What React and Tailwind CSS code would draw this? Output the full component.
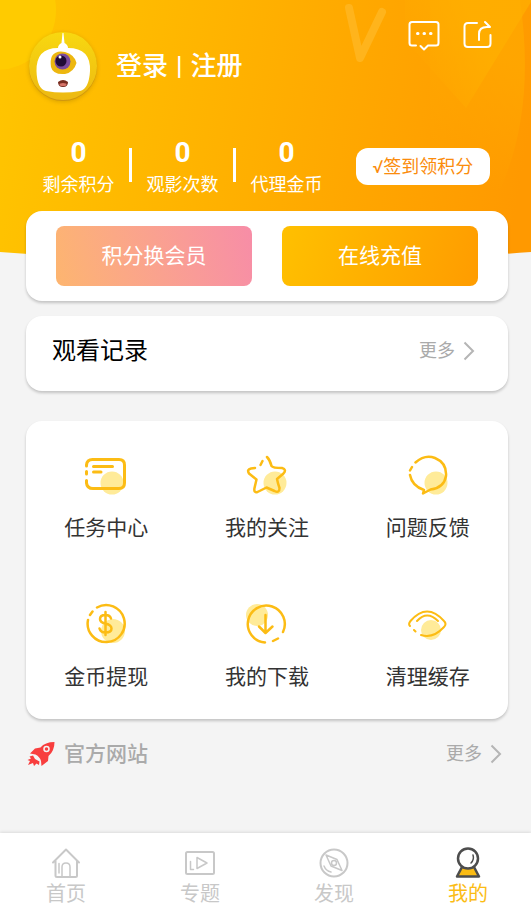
import { useState } from "react";

const stats = [
  { label: "剩余积分", value: 0 },
  { label: "观影次数", value: 0 },
  { label: "代理金币", value: 0 },
];

function HeaderBackground() {
  return (
    <svg
      className="absolute inset-x-0 top-0 h-[262px] w-full"
      viewBox="0 0 531 262"
      preserveAspectRatio="none"
      aria-hidden="true"
    >
      <defs>
        <linearGradient id="sky" gradientUnits="userSpaceOnUse" x1="0" y1="100" x2="520" y2="190">
          <stop offset="0" stopColor="#ffc400" />
          <stop offset="1" stopColor="#ff9900" />
        </linearGradient>
        <linearGradient id="ray" gradientUnits="userSpaceOnUse" x1="415" y1="70" x2="480" y2="40">
          <stop offset="0" stopColor="#ffb000" stopOpacity="0" />
          <stop offset="1" stopColor="#ffb000" stopOpacity="0.7" />
        </linearGradient>
        <linearGradient id="disc" gradientUnits="userSpaceOnUse" x1="460" y1="170" x2="525" y2="70">
          <stop offset="0" stopColor="#ffa800" stopOpacity="0" />
          <stop offset="1" stopColor="#ffa800" stopOpacity="0.8" />
        </linearGradient>
        <clipPath id="wave">
          <path d="M0 0H531V252Q265 272 0 252Z" />
        </clipPath>
      </defs>
      <g clipPath="url(#wave)">
        <rect width="531" height="262" fill="url(#sky)" />
        <circle cx="-4" cy="10" r="60" fill="#ffcb00" />
        <path d="M520 0Q536 110 500 190Q440 200 430 130L430 0Z" fill="url(#disc)" />
        <path d="M405 0H531V2L466 108L405 40Z" fill="url(#ray)" />
        <path
          d="M349 8L360 58L382 12"
          fill="none"
          stroke="#ffb41c"
          strokeWidth="8"
          strokeLinecap="round"
          strokeLinejoin="round"
        />
      </g>
    </svg>
  );
}

function Avatar() {
  return (
    <svg className="h-[70px] w-[70px] shrink-0 drop-shadow-sm" viewBox="0 0 70 70" aria-hidden="true">
      <defs>
        <linearGradient id="face" x1="0" y1="0" x2="0" y2="1">
          <stop offset="0" stopColor="#f8d810" />
          <stop offset="1" stopColor="#edb912" />
        </linearGradient>
      </defs>
      <circle cx="35" cy="36" r="34" fill="#d0960f" />
      <circle cx="35" cy="35" r="34" fill="url(#face)" />
      <path d="M34.500 2H35.500L36.500 12Q40 14 40 17Q63 17 62 40Q61 58 52 60Q35 63 18 60Q9 58 8.500 40Q8 17 30 17Q30 14 33.500 12Z" fill="#fff" />
      <path d="M24 25Q28 19 37 21Q47 24 48.500 32Q46 41 37 43Q25 44 23 36Q22 29 24 25Z" fill="#edb70f" />
      <circle cx="34.500" cy="30.500" r="8" fill="#7b4a9c" />
      <circle cx="33" cy="30" r="5.500" fill="#210b36" />
      <circle cx="32" cy="26" r="1.500" fill="#fff" />
      <path d="M30 51Q35 47 40 51Q40 56 35 56Q30 56 30 51Z" fill="#772d20" />
      <ellipse cx="35" cy="53.500" rx="3.500" ry="1.500" fill="#d7756a" />
    </svg>
  );
}

function MessageIcon() {
  return (
    <svg width="32" height="32" viewBox="0 0 32 32" fill="none" stroke="#fff" strokeWidth="2" strokeLinecap="round" strokeLinejoin="round">
      <path d="M8 25.500H4Q1.500 25.500 1.500 23V4.500Q1.500 2 4 2H28Q30.500 2 30.500 4.500V23Q30.500 25.500 28 25.500H20L16 29.500L12.500 26" />
      <path d="M9.500 13.500H10M16 13.500H16.500M22.500 13.500H23" strokeWidth="3" />
    </svg>
  );
}

function ShareIcon() {
  return (
    <svg width="32" height="32" viewBox="0 0 32 32" fill="none" stroke="#fff" strokeWidth="2" strokeLinecap="round" strokeLinejoin="round">
      <path d="M15 3H6Q2.500 3 2.500 6.500V23.500Q2.500 27 6 27H25Q28.500 27 28.500 23.500V15" />
      <path d="M17 20V14Q17 7 25 7H28L23 2" />
    </svg>
  );
}

function TaskIcon() {
  return (
    <>
      <circle cx="27" cy="29" r="11.500" fill="#ffeb99" stroke="none" />
      <path d="M1.500 12V11Q2 5.500 7.500 5.500H34Q39.500 5.500 39.500 11V29Q39.500 34.500 34 34.500H8Q2 34.500 1.500 29V26.500M1.500 17.500V20" strokeWidth="3" />
      <path d="M8.500 12.500H27.500M8.500 18H16" strokeWidth="3" />
    </>
  );
}

function StarIcon() {
  return (
    <>
      <circle cx="29" cy="29" r="11.500" fill="#ffeb99" stroke="none" />
      <path d="M21 3Q24 6 25.500 12Q27 14 36 14Q41 15.500 37.500 19.500L31 25Q32 30 33.500 34Q33.500 39.500 28.500 37L20.500 33.500L11.500 38Q7.500 39 8.500 34L10.500 25.500L3 19.500Q0.500 15.500 5 14.500L9 14M14.500 11L16.500 7" />
    </>
  );
}

function FeedbackIcon() {
  return (
    <>
      <circle cx="29" cy="29" r="11.500" fill="#ffeb99" stroke="none" />
      <path d="M8.500 8.500Q18 0 28 4Q40 9 39 22Q37 34 23.500 35.500L16 39.500L17 36Q5 32 3 21M3 16.500L5 13" />
    </>
  );
}

function CoinIcon() {
  return (
    <>
      <circle cx="28" cy="28" r="12" fill="#ffeb99" stroke="none" />
      <path d="M12 4.500A18.500 18.500 0 1 1 3 17M5 12L7.500 8.500" />
      <path d="M26 15.500Q25 12 20.500 12Q15 12 15 16Q15 19.500 20.500 20.500Q26.500 22 26.500 25.500Q26.500 29.500 20.500 29.500Q15.500 29.500 14.500 25.500M20.500 9V32" />
    </>
  );
}

function DownloadIcon() {
  return (
    <>
      <circle cx="11" cy="12" r="11" fill="#ffeb99" stroke="none" />
      <path d="M19 39.500A18.500 18.500 0 1 1 37 29M27 38L32 35.500" />
      <path d="M19.500 12V29M13 23.500L19.500 30L26.500 23.500" />
    </>
  );
}

function EyeIcon() {
  return (
    <>
      <circle cx="24" cy="27" r="10" fill="#ffeb99" stroke="none" />
      <path d="M3 23Q1 21 3.500 18Q20 -1 37 18Q40 21 37 24Q26 36 14 32M7 27L8.500 28.500" strokeWidth="2" />
      <path d="M10 18Q20 7 31 18" strokeWidth="2" />
    </>
  );
}

const services = [
  { label: "任务中心", icon: TaskIcon },
  { label: "我的关注", icon: StarIcon },
  { label: "问题反馈", icon: FeedbackIcon },
  { label: "金币提现", icon: CoinIcon },
  { label: "我的下载", icon: DownloadIcon },
  { label: "清理缓存", icon: EyeIcon },
];

function RocketIcon() {
  return (
    <svg width="28" height="26" viewBox="0 0 28 26" aria-hidden="true">
      <path fill="#f83e3e" d="M27.500 1Q27.500 10 21.500 15L21 20L14.500 25L14 20Q13 16 8.500 13.500L3 12.500L8 7.500L13.500 6.500Q18 1 27.500 1Z" />
      <path fill="#f83e3e" d="M6 14.500L8 18L12.500 20.500L12 24L9.500 22.500L7 25L6 22L1 24L3 20L0.500 19L4 17.500L2.500 15.500Z" />
      <circle cx="19.500" cy="8" r="2.500" fill="#f83e3e" stroke="#f3f3f3" strokeWidth="1.500" />
    </svg>
  );
}

function HomeIcon() {
  return (
    <>
      <path d="M2 15.500L15 2.500L28 15.500M4.500 14V28.500Q4.500 30 6 30H24.500Q26 30 26 28.500V14" />
      <path d="M11 30V20Q11 16 15 16Q19 16 19 20V30M8 16.500V26" strokeWidth="1.500" />
    </>
  );
}

function TopicIcon() {
  return (
    <>
      <rect x="1" y="5" width="28" height="22" rx="1.500" />
      <path d="M12 10.500V21.500L22 16ZM5.500 14.500V22.500H8.500" strokeWidth="1.500" />
    </>
  );
}

function DiscoverIcon() {
  return (
    <>
      <circle cx="15" cy="16" r="13.500" />
      <path d="M7 8L18 12.500L23 23.500L12 19ZM5 19Q7 24 12 25" strokeWidth="1.500" />
      <circle cx="15" cy="16" r="2.500" strokeWidth="1.500" />
    </>
  );
}

function MineIcon() {
  return (
    <>
      <path d="M9 20H21L26 29.500H4Z" fill="#fbbc14" stroke="#4d4d4d" strokeWidth="2.500" />
      <circle cx="15" cy="11.500" r="10" fill="#fff" stroke="#4d4d4d" strokeWidth="2.500" />
      <path d="M20 8Q21.500 12.500 18 16" stroke="#4d4d4d" strokeWidth="1.500" />
    </>
  );
}

const tabs = [
  { id: "home", label: "首页", icon: HomeIcon },
  { id: "topic", label: "专题", icon: TopicIcon },
  { id: "discover", label: "发现", icon: DiscoverIcon },
  { id: "mine", label: "我的", icon: MineIcon },
];

function MoreLink() {
  return (
    <a href="#more" className="flex items-center gap-2 text-[18px] leading-6 text-[#aaaaaa]">
      更多
      <svg width="12" height="20" viewBox="0 0 12 20" fill="none" stroke="#b5b5b5" strokeWidth="2" aria-hidden="true">
        <path d="M1.500 1.500L10 10L1.500 18.500" />
      </svg>
    </a>
  );
}

export default function App() {
  const [activeTab, setActiveTab] = useState("mine");

  return (
    <div className="relative flex min-h-screen flex-col bg-[#f4f4f4] font-[Roboto,'Noto_Sans_CJK_SC',sans-serif]">
      <HeaderBackground />
      <main className="relative pr-[23px] pl-[26px]">
        <header className="text-white">
          <div className="flex items-start justify-between pt-5 pr-[14px] pl-[2px]">
            <div className="flex items-center gap-[18px] pt-[11px]">
              <Avatar />
              <h1 className="flex gap-2 text-[26px] leading-9 font-medium">
                <a href="#login">登录</a>
                <span>|</span>
                <a href="#register">注册</a>
              </h1>
            </div>
            <div className="flex gap-[22px]">
              <button type="button" aria-label="消息">
                <MessageIcon />
              </button>
              <button type="button" aria-label="分享">
                <ShareIcon />
              </button>
            </div>
          </div>

          <div className="mt-9 flex items-start justify-between pr-[18px] pl-[2px]">
            <dl className="flex items-start">
              {stats.map((item, i) => (
                <div key={item.label} className="flex items-start">
                  {i > 0 && <span className="mt-[11px] h-[34px] w-[3px] bg-white" />}
                  <div className="flex w-[101px] flex-col-reverse items-center">
                    <dt className="text-[18px] leading-8">{item.label}</dt>
                    <dd className="text-[28px] leading-8 font-bold">{item.value}</dd>
                  </div>
                </div>
              ))}
            </dl>
            <button
              type="button"
              className="mt-[11px] h-[37px] w-[134px] rounded-xl bg-white text-[18px] leading-6 text-[#fb8c0c]"
            >
              √签到领积分
            </button>
          </div>
        </header>

        <section className="mt-[10px] flex gap-[30px] rounded-2xl bg-white px-[30px] py-[15px] shadow-[0_2px_3px_rgba(0,0,0,0.2)]">
          <button
            type="button"
            className="h-[60px] flex-1 rounded-lg bg-linear-75 from-[#fdb56f] to-[#f78da7] text-[21px] leading-8 text-white"
          >
            积分换会员
          </button>
          <button
            type="button"
            className="h-[60px] flex-1 rounded-lg bg-linear-105 from-[#ffc000] to-[#ff9c00] text-[21px] leading-8 text-white"
          >
            在线充值
          </button>
        </section>

        <section className="mt-[15px] flex h-[75px] items-center justify-between rounded-2xl bg-white pr-[33px] pb-[6px] pl-[26px] shadow-[0_2px_3px_rgba(0,0,0,0.2)]">
          <h2 className="text-[24px] leading-8 text-black">观看记录</h2>
          <MoreLink />
        </section>

        <section className="mt-[30px] grid grid-cols-3 rounded-2xl bg-white shadow-[0_2px_3px_rgba(0,0,0,0.2)]">
          {services.map(({ label, icon: Icon }) => (
            <a
              key={label}
              href="#service"
              className="flex h-[149px] flex-col items-center gap-4 pt-[33px] text-[21px] leading-8 text-[#333333]"
            >
              <svg
                width="42"
                height="42"
                viewBox="0 0 42 42"
                fill="none"
                stroke="#fcbc14"
                strokeWidth="2.500"
                strokeLinecap="round"
                strokeLinejoin="round"
                aria-hidden="true"
              >
                <Icon />
              </svg>
              {label}
            </a>
          ))}
        </section>

        <section className="mt-[19px] mb-5 flex items-center justify-between pr-[6px] pl-px">
          <h2 className="flex items-center gap-[9px] text-[21px] leading-8 font-medium text-[#aaaaaa]">
            <RocketIcon />
            官方网站
          </h2>
          <MoreLink />
        </section>
      </main>

      <nav className="sticky bottom-0 mt-auto flex justify-between bg-white pt-[14px] pr-[43px] pb-[5px] pl-[46px] shadow-[0_-1px_3px_rgba(0,0,0,0.1)]">
        {tabs.map(({ id, label, icon: Icon }) => (
          <a
            key={id}
            href={`#${id}`}
            onClick={() => setActiveTab(id)}
            aria-current={activeTab === id ? "page" : undefined}
            className={`flex flex-col items-center text-[20px] leading-[30px] ${
              activeTab === id ? "text-[#fbbc14]" : "text-[#c8c8c8]"
            }`}
          >
            <svg
              width="30"
              height="32"
              viewBox="0 0 30 32"
              fill="none"
              stroke="#c8c8c8"
              strokeWidth="2"
              strokeLinecap="round"
              strokeLinejoin="round"
              aria-hidden="true"
            >
              <Icon />
            </svg>
            {label}
          </a>
        ))}
      </nav>
    </div>
  );
}
